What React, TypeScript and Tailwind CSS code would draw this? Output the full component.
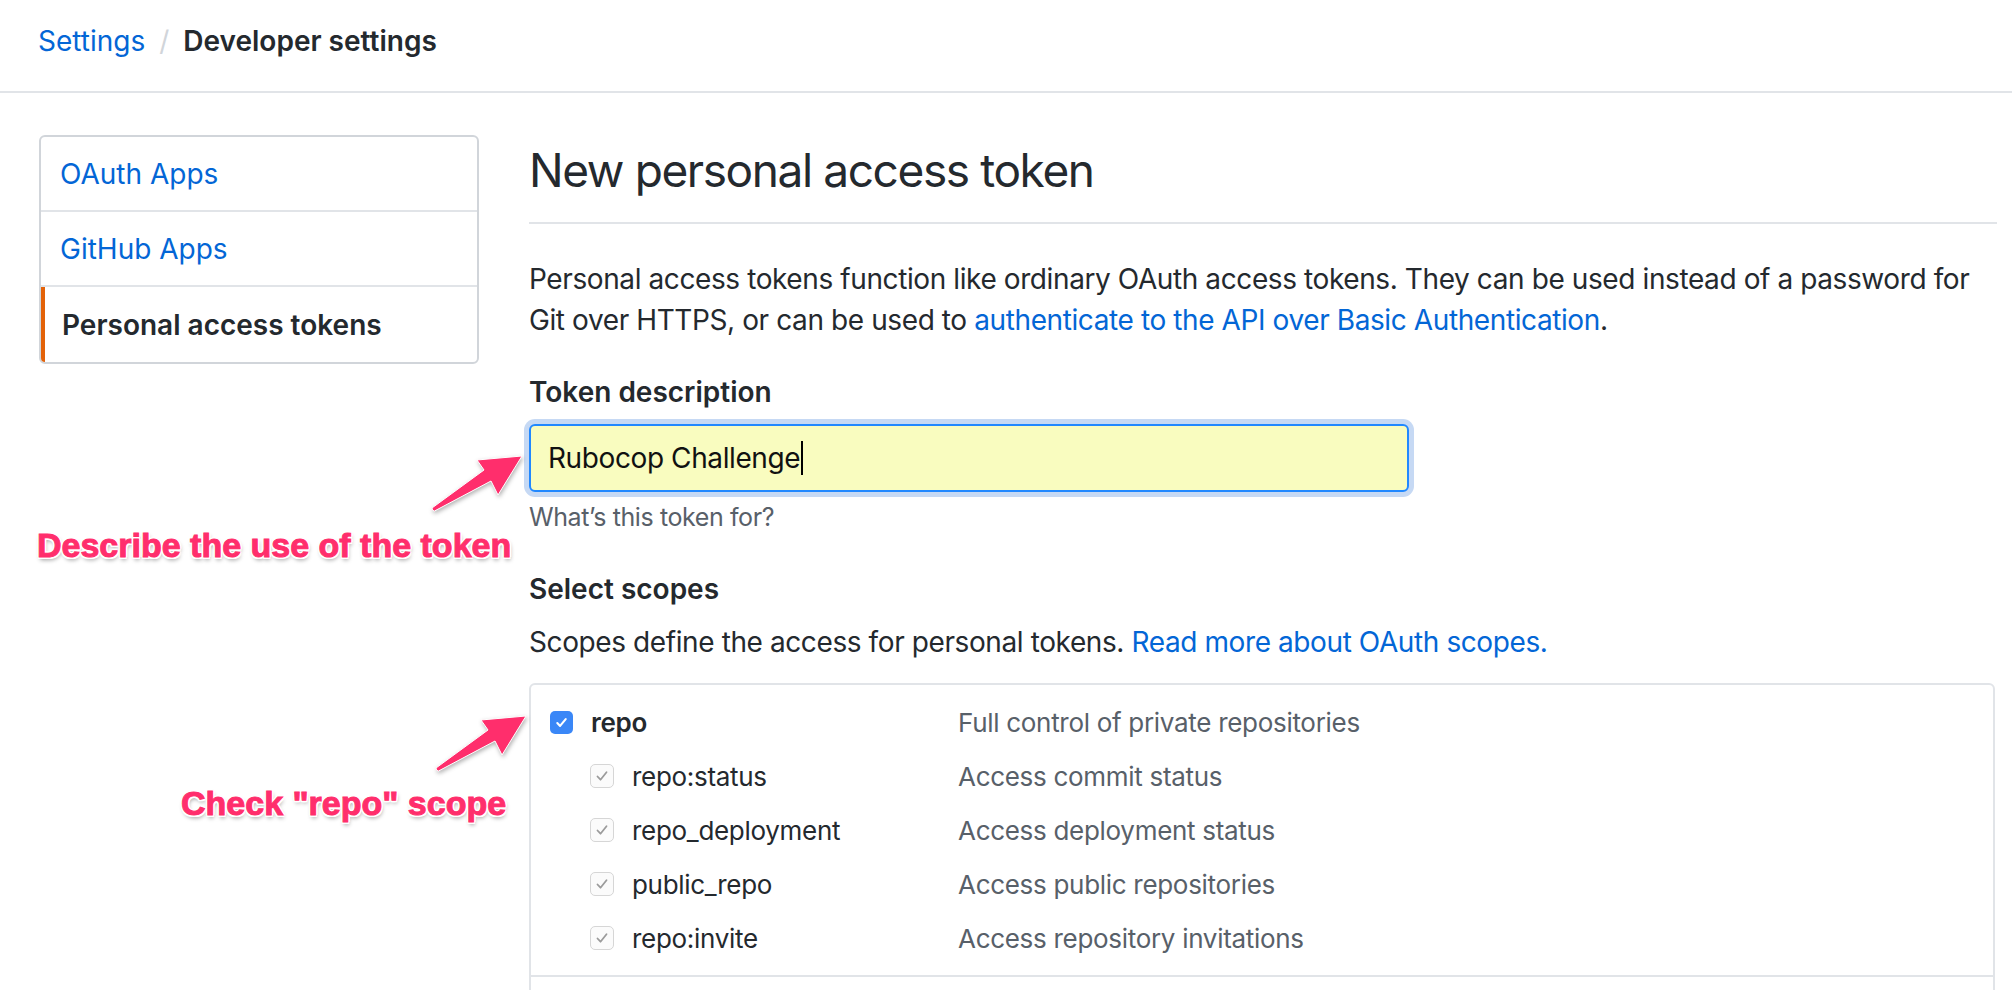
const scopes = [
  { name: "repo", desc: "Full control of private repositories", parent: true },
  { name: "repo:status", desc: "Access commit status", parent: false },
  { name: "repo_deployment", desc: "Access deployment status", parent: false },
  { name: "public_repo", desc: "Access public repositories", parent: false },
  { name: "repo:invite", desc: "Access repository invitations", parent: false },
];

const menu = [
  { label: "OAuth Apps", active: false },
  { label: "GitHub Apps", active: false },
  { label: "Personal access tokens", active: true },
];

function Check({ on }: { on: boolean }) {
  if (on) {
    return (
      <span className="flex h-[23px] w-[23px] shrink-0 items-center justify-center rounded-[5px] bg-[#3a87f7]">
        <svg width="15" height="15" viewBox="0 0 16 16" fill="none">
          <path d="M3.5 8.5l3 3.2 6-7.4" stroke="#fff" strokeWidth="2.2" strokeLinecap="round" strokeLinejoin="round" />
        </svg>
      </span>
    );
  }
  return (
    <span className="flex h-[24px] w-[24px] shrink-0 items-center justify-center rounded-[5px] border border-[#d6d6d6] bg-[#fbfbfb]">
      <svg width="16" height="16" viewBox="0 0 16 16" fill="none">
        <path d="M3.5 8.5l3 3.2 6-7.4" stroke="#9b9b9b" strokeWidth="1.8" strokeLinecap="round" strokeLinejoin="round" />
      </svg>
    </span>
  );
}

function Arrow({ className }: { className: string }) {
  return (
    <svg className={className} width="100" height="64" viewBox="0 0 100 64" fill="none">
      <path
        d="M4 56 Q4 59 6.5 59 L63 29 L70 43 L94 4 L49 8 L56 18 Z"
        fill="#ff2e6c"
        stroke="#fff"
        strokeWidth="1"
        strokeLinejoin="round"
      />
    </svg>
  );
}

export default function App() {
  return (
    <div className="relative h-[990px] w-[2012px] overflow-hidden bg-white font-['Inter','Noto_Sans',sans-serif] text-[#24292e]">
      <header className="h-[93px] border-b-2 border-[#e1e4e8] pl-[38px] pt-[20px] text-[28px] leading-[42px]">
        <a className="text-[#0366d6]">Settings</a>
        <span className="mx-[14px] text-[#d1d5da]">/</span>
        <span className="font-semibold">Developer settings</span>
      </header>

      <div className="flex pt-[42px]">
        <nav className="ml-[39px] w-[440px] self-start overflow-hidden rounded-[6px] border-2 border-[#d1d5da]">
          {menu.map((item, i) => (
            <div
              key={item.label}
              className={
                "flex h-[75px] items-center text-[28px] " +
                (i < menu.length - 1 ? "border-b-2 border-[#e1e4e8] " : "") +
                (item.active
                  ? "border-l-4 border-l-[#e36209] pl-[17px] font-semibold text-[#24292e]"
                  : "pl-[19px] text-[#0366d6]")
              }
            >
              {item.label}
            </div>
          ))}
        </nav>

        <main className="ml-[50px] w-[1468px]">
          <h1 className="mt-[5px] border-b-2 border-[#e1e4e8] pb-[22px] text-[46px] font-normal leading-[60px] tracking-[-1.4px]">
            New personal access token
          </h1>

          <p className="mt-[35px] whitespace-nowrap text-[28px] leading-[41px] tracking-[-0.4px]">
            Personal access tokens function like ordinary OAuth access tokens. They can be used instead of a password for
            <br />
            Git over HTTPS, or can be used to{" "}
            <a className="text-[#0366d6]">authenticate to the API over Basic Authentication</a>.
          </p>

          <div className="mt-[30px] text-[28px] font-semibold leading-[42px]">Token description</div>
          <div className="mt-[11px] flex h-[68px] w-[880px] items-center rounded-[6px] border-2 border-[#2188ff] bg-[#f9fcbf] pl-[17px] text-[28px] tracking-[-0.4px] text-[#111] shadow-[0_0_0_5px_#c6d9f4]">
            Rubocop Challenge
            <span className="ml-[1px] h-[34px] w-[2px] bg-black" />
          </div>
          <div className="mt-[6px] text-[25px] leading-[39px] tracking-[-0.4px] text-[#586069]">What’s this token for?</div>

          <div className="mt-[31px] text-[28px] font-semibold leading-[42px]">Select scopes</div>
          <p className="mt-[11px] text-[28px] leading-[42px] tracking-[-0.4px]">
            Scopes define the access for personal tokens.{" "}
            <a className="text-[#0366d6]">Read more about OAuth scopes.</a>
          </p>

          <div className="mt-[20px] w-[1466px] rounded-t-[6px] border-2 border-[#e1e4e8]">
            <div className="border-b-2 border-[#e1e4e8] pb-[10px] pt-[10px]">
              {scopes.map((s) => (
                <div key={s.name} className="flex h-[54px] items-center text-[26px] tracking-[-0.3px]">
                  <div
                    className={
                      "flex w-[427px] shrink-0 items-center gap-[18px] " +
                      (s.parent ? "pl-[19px] font-semibold" : "pl-[59px]")
                    }
                  >
                    <Check on={s.parent} />
                    <span>{s.name}</span>
                  </div>
                  <div className="text-[#586069]">{s.desc}</div>
                </div>
              ))}
            </div>
            <div className="h-[40px]" />
          </div>
        </main>
      </div>

      <Arrow className="absolute left-[428px] top-[452px] drop-shadow-[1px_2px_2px_rgba(0,0,0,0.3)]" />
      <div className="absolute left-[37px] top-[528px] whitespace-nowrap font-['Liberation_Sans',Arial,sans-serif] text-[34px] font-bold leading-none text-[#ff2e6c] [-webkit-text-stroke:1px_#ff2e6c] [text-shadow:-2px_0_#fff,2px_0_#fff,0_-2px_#fff,0_2px_#fff,-1.5px_-1.5px_#fff,1.5px_1.5px_#fff,-1.5px_1.5px_#fff,1.5px_-1.5px_#fff,1px_3px_4px_rgba(0,0,0,0.4)]">
        Describe the use of the token
      </div>

      <Arrow className="absolute left-[432px] top-[712px] drop-shadow-[1px_2px_2px_rgba(0,0,0,0.3)]" />
      <div className="absolute left-[181px] top-[786px] whitespace-nowrap font-['Liberation_Sans',Arial,sans-serif] text-[34px] font-bold leading-none text-[#ff2e6c] [-webkit-text-stroke:1px_#ff2e6c] [text-shadow:-2px_0_#fff,2px_0_#fff,0_-2px_#fff,0_2px_#fff,-1.5px_-1.5px_#fff,1.5px_1.5px_#fff,-1.5px_1.5px_#fff,1.5px_-1.5px_#fff,1px_3px_4px_rgba(0,0,0,0.4)]">
        Check "repo" scope
      </div>
    </div>
  );
}
